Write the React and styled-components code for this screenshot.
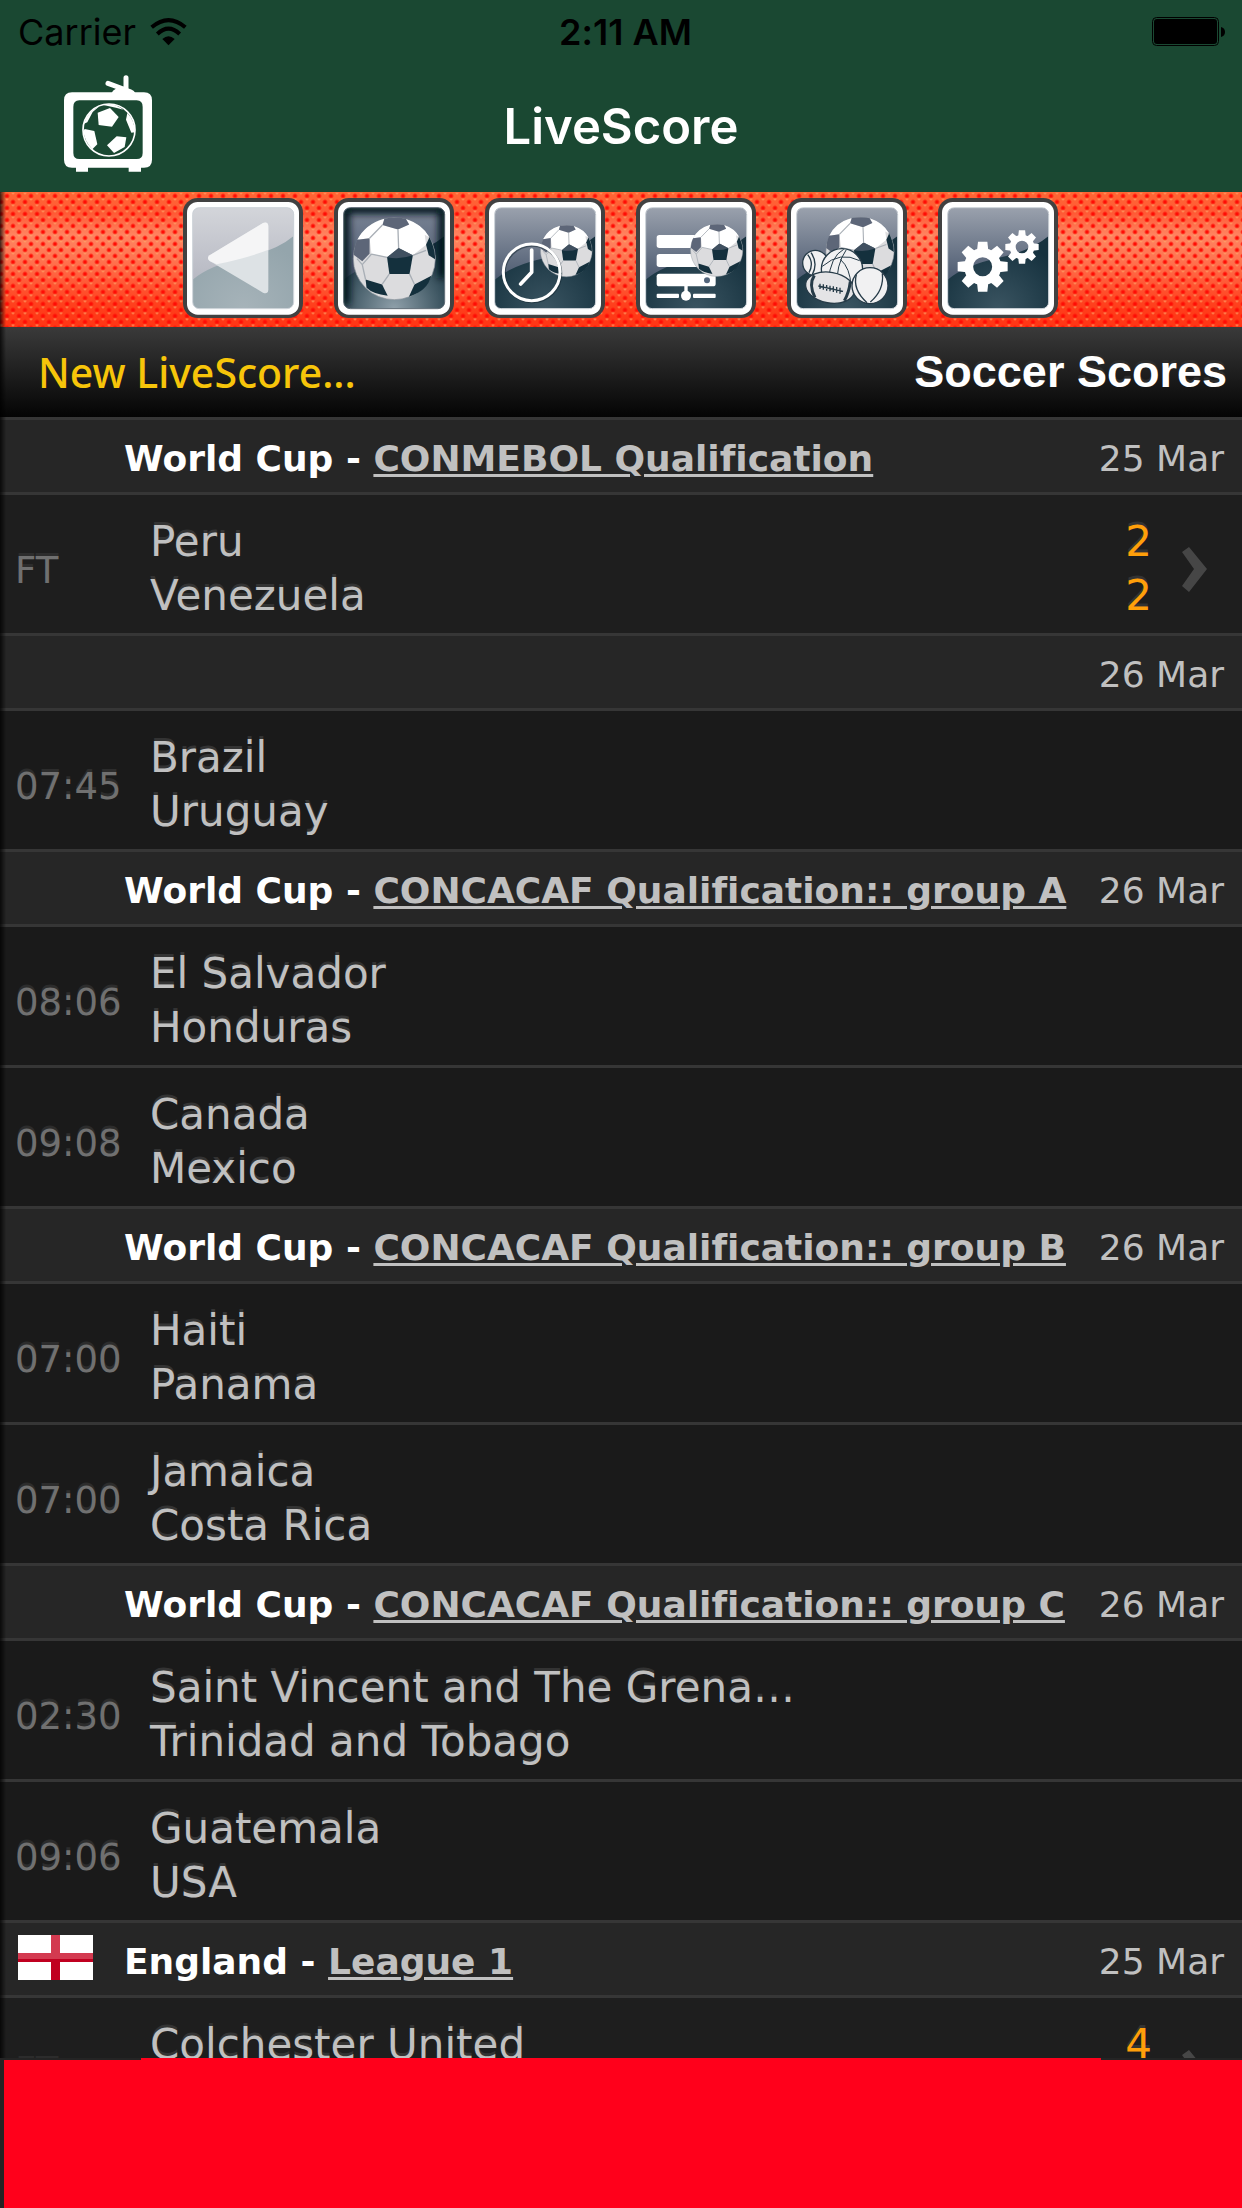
import React from "react";
import styled, { createGlobalStyle, css } from "styled-components";

const GlobalStyle = createGlobalStyle`
  *, *::before, *::after { box-sizing: border-box; }
  html, body { margin: 0; background: #1a1a1a; }
  button { font: inherit; }
`;

const uiFont = `Inter, Roboto, sans-serif`;
const bodyFont = `"DejaVu Sans", Verdana, sans-serif`;

const Screen = styled.div`
  display: flex;
  flex-direction: column;
  height: 100vh;
  overflow: hidden;
  font-family: ${bodyFont};
  font-variant-ligatures: none;
  color: #c0c0c0;
`;

const Header = styled.header`
  flex: none;
  background: #1a4832;
  font-family: ${uiFont};
`;

const StatusBar = styled.div`
  display: grid;
  grid-template-columns: 1fr auto 1fr;
  align-items: center;
  height: 60px;
  padding: 3px 17px 0 18px;
  color: #000;
  font-size: 36px;
  line-height: 44px;
`;

const Carrier = styled.div`
  display: flex;
  align-items: center;
  gap: 14px;
`;

const Clock = styled.time`
  padding-left: 8px;
  font-weight: 600;
`;

const Battery = styled.div`
  display: flex;
  justify-content: flex-end;
`;

const NavBar = styled.div`
  display: grid;
  grid-template-columns: 1fr auto 1fr;
  align-items: center;
  height: 132px;
  padding: 2px 64px 0;
`;

const LogoButton = styled.button`
  justify-self: start;
  display: flex;
  padding: 0;
  margin-bottom: 8px;
  border: 0;
  background: none;
`;

const AppTitle = styled.h1`
  margin: 0;
  color: #fff;
  font-size: 49px;
  line-height: 60px;
  font-weight: 600;
`;

const Content = styled.div`
  position: relative;
  flex: 1;
  min-height: 0;
  display: flex;
  flex-direction: column;

  &::after {
    content: "";
    position: absolute;
    inset: 0 auto 0 0;
    width: 6px;
    background: linear-gradient(to right, rgba(0, 0, 0, 0.75), rgba(0, 0, 0, 0));
    pointer-events: none;
  }
`;

const Toolbar = styled.nav`
  flex: none;
  display: flex;
  justify-content: center;
  gap: 31px;
  padding: 6px 1px 9px 0;
  background-color: #ff5a30;
  background-image:
    radial-gradient(circle, #ff0d05 1px, rgba(255, 13, 5, 0) 3px),
    radial-gradient(circle, #ff0d05 1px, rgba(255, 13, 5, 0) 3px),
    radial-gradient(circle, rgba(255, 176, 112, 0.8) 0, rgba(255, 176, 112, 0) 2px),
    radial-gradient(circle, rgba(255, 176, 112, 0.8) 0, rgba(255, 176, 112, 0) 2px),
    linear-gradient(#ff6634 0%, #ff5a35 16%, #ff8460 32%, #ff7450 50%, #ff3f1c 84%, #ff3414 100%);
  background-size: 12px 12px, 12px 12px, 12px 12px, 12px 12px, 100% 100%;
  background-position: 1px -2px, 7px 4px, 7px 7px, 1px 1px, 0 0;
`;

const ToolButton = styled.button`
  display: flex;
  width: 120px;
  height: 120px;
  padding: 0;
  border: 0;
  background: none;
`;

const TitleBar = styled.div`
  flex: none;
  display: flex;
  align-items: center;
  justify-content: space-between;
  height: 90px;
  padding: 0 15px 0 38px;
  background: linear-gradient(#3a3a3a, #040404);
`;

const NewsLink = styled.a`
  color: #f7c50a;
  font-family: "Noto Sans", "Open Sans", sans-serif;
  font-size: 41px;
  line-height: 54px;
  font-weight: 500;
  text-decoration: none;
`;

const PageTitle = styled.h2`
  margin: 0;
  color: #fff;
  font-family: "Liberation Sans", Arial, sans-serif;
  font-size: 45px;
  line-height: 54px;
  font-weight: 700;
  text-shadow: 0 -3px 0 #2c2c2c;
`;

const Scores = styled.main`
  flex: 1;
  min-height: 0;
  overflow-y: auto;
  scrollbar-width: none;
`;

const League = styled.section``;

const LeagueHeader = styled.header`
  display: flex;
  align-items: center;
  height: 75px;
  padding: 5px 18px 0 18px;
  border-top: 3px solid #363636;
  background: #262626;
  font-size: 36px;
  line-height: 42px;
`;

const FlagSlot = styled.div`
  flex: none;
  display: flex;
  width: 106px;
  padding-bottom: 9px;
`;

const LeagueName = styled.h3`
  flex: 1;
  margin: 0;
  color: #fff;
  font-size: 36px;
  font-weight: 700;
  white-space: nowrap;
`;

const LeagueLink = styled.a`
  color: #c0c0c0;
  text-decoration: underline;
  text-decoration-thickness: 3px;
  text-underline-offset: 3px;
`;

const DateLabel = styled.time`
  flex: none;
`;

const MatchList = styled.ul`
  margin: 0;
  padding: 0;
  list-style: none;
`;

const MatchItem = styled.li`
  border-top: 3px solid #363636;
  background: ${(p) => (p.$played ? "#1e1e1e" : "#1a1a1a")};
`;

const matchLayout = css`
  display: flex;
  align-items: center;
  height: 138px;
  padding: 20px 35px 10px 15px;
  color: inherit;
  text-decoration: none;
`;

const MatchRow = styled.div`
  ${matchLayout}
`;

const MatchLink = styled.a`
  ${matchLayout}
`;

const Kickoff = styled.span`
  flex: none;
  width: 135px;
  padding-top: 4px;
  color: #707070;
  font-size: 37px;
  line-height: 54px;
  text-shadow: 0 -3px 0 #2c2c2c;
`;

const Lines = styled.span`
  display: flex;
  flex-direction: column;
  font-size: 42px;
  line-height: 54px;
  text-shadow: 0 -3px 0 #333;
  ${(p) =>
    p.$score
      ? css`
          color: #ff9f0a;
          padding-right: 29px;
        `
      : css`
          flex: 1;
        `}
`;

const AdFooter = styled.footer`
  flex: none;
  display: flex;
  flex-direction: column;
  align-items: center;
  padding-left: 4px;
  background: #242424;
`;

const AdBanner = styled.div`
  width: 960px;
  max-width: 100%;
  height: 2px;
  margin-right: 4px;
  background: #ff001b;
`;

const AdBody = styled.div`
  width: 100%;
  height: 148px;
  background: #ff001b;
`;

const WifiIcon = () => (
  <svg width="37" height="28" viewBox="0 0 111 84" aria-hidden="true">
    <path d="M55.500 82 L37 63 Q55.500 46 74 63 Z" fill="#000" />
    <path d="M22 48 Q55.500 16 89 48" fill="none" stroke="#000" strokeWidth="12" />
    <path d="M5 28 Q55.500 -15 106 28" fill="none" stroke="#000" strokeWidth="12" />
  </svg>
);

const BatteryIcon = () => (
  <svg width="73" height="30" viewBox="0 0 73 30" aria-hidden="true">
    <rect x="0.5" y="0.5" width="66" height="28" rx="4" fill="none" stroke="#000" />
    <rect x="2" y="2" width="63" height="25" rx="3" />
    <path d="M69 10 q4 1 4 5 t-4 5 z" />
  </svg>
);

const LogoIcon = () => (
  <svg width="88" height="97" viewBox="192 224 264 291" aria-hidden="true">
    <path
      fill="#fff"
      fillRule="evenodd"
      d="M216 276 H432 Q456 276 456 300 V478 Q456 502 432 502 H423 V514 H386 V502 H264 V514 H228 V502 H216 Q192 502 192 478 V300 Q192 276 216 276 Z M238 300 Q220 300 220 320 V458 Q220 476 238 476 H410 Q428 476 428 458 V320 Q428 300 410 300 Z"
    />
    <path d="M335 278 Q340 262 370 262 Q400 264 406 278 Z" fill="#fff" />
    <path d="M378 232 V268 M324 249 L370 266" stroke="#fff" strokeWidth="15" strokeLinecap="round" />
    <circle cx="327" cy="389" r="78" fill="none" stroke="#fff" strokeWidth="5" />
    <g fill="#fff">
      <path d="M293 337 L330 323 L356 350 L336 379 L296 374 Z" />
      <path d="M350 408 L379 411 L374 440 L342 458 L321 435 Z" />
      <path d="M254 386 L283 392 L292 432 L277 447 Q254 424 250 392 Z" />
      <path d="M378 358 L382 338 Q404 360 405 396 L394 397 Z" />
      <path d="M252 370 Q262 334 300 316 L278 335 L262 366 Z" />
      <path d="M310 314 Q340 306 370 328 L348 322 Z" />
    </g>
  </svg>
);

const SoccerBall = ({ cx, cy, r, shade }) => (
  <g transform={`translate(${cx} ${cy}) scale(${r / 125})`}>
    <circle r="124" fill={shade} stroke="#8b949d" strokeWidth="2" />
    <path d="M-75 -62 L-36 -102 L11 -88 L13 -32 L-22 -4 L-69 -14 Z M11 -88 L45 -103 L92 -72 L96 -42 L56 -10 L13 -32 Z M-75 -62 L-112 -57 Q-88 -105 -30 -121 L-36 -102 Z M45 -103 L35 -120 Q85 -104 106 -65 L92 -72 Z" fill="#fff" />
    <g fill="#14303d">
      <path d="M-22 -4 L13 -32 L56 -10 L46 46 L-15 46 Z" />
      <path d="M-87 63 L-37 78 L-20 112 Q-65 107 -84 88 Z" />
      <path d="M112 52 Q100 98 44 115 L61 78 Z" />
      <path d="M96 -42 L106 -65 Q124 -30 123 2 L104 -10 Z" />
    </g>
    <g fill="#5d6678">
      <path d="M-112 -57 L-75 -62 L-75 -15 L-97 8 L-123 -12 Q-121 -40 -112 -57 Z" />
      <path d="M-30 -121 Q5 -128 35 -120 L45 -103 L11 -88 L-36 -102 Z" />
      <path d="M-22 -4 L13 -32 L56 -10 Q18 4 -22 -4 Z" opacity="0.6" />
    </g>
    <path
      d="M-69 -14 L-22 -4 M-36 -102 L-75 -62 M13 -32 L11 -88 M56 -10 L96 -25 M46 46 L61 78 M-15 46 L-37 78 M-97 18 L-69 -14 M-97 18 L-87 63 M-97 18 L-113 0"
      fill="none"
      stroke="#a9afb6"
      strokeWidth="4"
    />
  </g>
);

const Gear = ({ cx, cy, r }) => (
  <g transform={`translate(${cx} ${cy}) scale(${r / 75})`}>
    <circle r="42" fill="none" stroke="#fff" strokeWidth="27" />
    {[0, 45, 90, 135, 180, 225, 270, 315].map((a) => (
      <path key={a} d="M-17 -48 L-14 -75 H14 L17 -48 Z" fill="#fff" transform={`rotate(${a})`} />
    ))}
  </g>
);

const Tile = ({ id, pale, pressed, children }) => (
  <svg width="120" height="120" viewBox="0 0 360 360" aria-hidden="true">
    <defs>
      <linearGradient id={`${id}-top`} x1="0" y1="0" x2="0" y2="1">
        <stop offset="0" stopColor={pale ? "#d3d5da" : pressed ? "#7a8495" : "#9aa1ad"} />
        <stop offset="1" stopColor={pale ? "#b7b9c3" : "#4c5a70"} />
      </linearGradient>
      <radialGradient id={`${id}-low`} cx="0.5" cy="1" r="0.7">
        <stop offset="0" stopColor={pale ? "#a6b3b9" : pressed ? "#8fa0aa" : "#3a5461"} />
        <stop offset="1" stopColor={pale ? "#94a5ac" : "#15313e"} />
      </radialGradient>
      <clipPath id={`${id}-clip`}>
        <rect x="29" y="29" width="303" height="303" rx="20" />
      </clipPath>
      <filter id={`${id}-soft`} x="-20%" y="-20%" width="140%" height="140%">
        <feGaussianBlur stdDeviation="11" />
      </filter>
    </defs>
    <rect width="360" height="360" rx="44" fill="#414141" />
    <rect x="12" y="12" width="336" height="338" rx="32" fill="#fff" />
    <g clipPath={`url(#${id}-clip)`}>
      <rect x="29" y="29" width="303" height="303" fill={`url(#${id}-low)`} />
      <path d="M29 29 H332 V114 Q280 158 180 180 Q80 202 29 245 Z" fill={`url(#${id}-top)`} />
      {pressed && (
        <path
          d="M34 320 V34 H326 V240"
          fill="none"
          stroke="#03141d"
          strokeWidth="26"
          filter={`url(#${id}-soft)`}
        />
      )}
    </g>
    <rect x="29" y="29" width="303" height="303" rx="20" fill="none" stroke={pressed ? "#5b6872" : "#cdd2d8"} strokeWidth="3" />
    {children}
  </svg>
);

const BackIcon = () => (
  <Tile id="back" pale>
    <path d="M80 172 L240 75 Q256 70 256 86 V276 Q254 290 240 284 L80 189 Q70 180 80 172 Z" fill="#dde2e5" />
    <path d="M80 172 L240 75 Q256 70 256 86 V155 Q200 178 101 199 L80 189 Q70 180 80 172 Z" fill="#f5f5f6" />
  </Tile>
);

const ScoresIcon = () => (
  <Tile id="scores" pressed>
    <SoccerBall cx={181} cy={182} r={124} shade="#dcdcde" />
  </Tile>
);

const LiveIcon = () => (
  <Tile id="live">
    <SoccerBall cx={244} cy={159} r={78} shade="#dcdcde" />
    <g fill="none" strokeLinejoin="round" strokeLinecap="round">
      <circle cx="142" cy="226" r="85" stroke="#12242e" strokeWidth="10" opacity="0.5" />
      <circle cx="140" cy="223" r="85" stroke="#fff" strokeWidth="9" />
      <path d="M140 156 V223 L107 258" stroke="#fff" strokeWidth="11" />
    </g>
  </Tile>
);

const TablesIcon = () => (
  <Tile id="tables">
    <g fill="#fff">
      <rect x="62" y="111" width="140" height="39" rx="8" />
      <rect x="62" y="168" width="140" height="39" rx="8" />
      <rect x="62" y="227" width="177" height="38" rx="8" />
      <rect x="145" y="262" width="10" height="24" />
      <circle cx="150" cy="293" r="15" />
      <rect x="62" y="287" width="67" height="13" rx="3" />
      <rect x="171" y="287" width="68" height="13" rx="3" />
    </g>
    <circle cx="213" cy="247" r="9" fill="#53657b" />
    <SoccerBall cx={242} cy={157} r={79} shade="#dcdcde" />
  </Tile>
);

const SportsIcon = () => (
  <Tile id="sports">
    <SoccerBall cx={219} cy={160} r={103} shade="#dcdcde" />
    <g stroke="#263b48" strokeWidth="4" fill="#f1f1f2">
      <circle cx="85" cy="195" r="38" />
      <path d="M62 170 Q82 195 66 224 M72 164 Q94 195 76 230" fill="none" />
      <circle cx="165" cy="214" r="62" />
      <path d="M106 205 Q160 158 218 188 M124 250 Q130 175 170 154 M150 272 Q146 200 178 155 M160 184 Q190 210 192 265" fill="none" strokeWidth="3" />
      <ellipse cx="129" cy="269" rx="74" ry="46" transform="rotate(10 129 269)" fill="#e4e4e6" />
      <path d="M82 232 Q64 260 84 298 M190 250 Q186 284 172 308" fill="none" strokeWidth="9" />
      <path d="M94 264 L168 280 M99 257 V273 M109 259 V275 M119 261 V278 M129 263 V280 M139 265 V282 M149 267 V284 M159 269 V287" strokeWidth="4" />
      <circle cx="249" cy="263" r="54" />
      <path d="M208 230 Q196 275 240 314 M286 226 Q292 276 250 312" fill="none" />
    </g>
  </Tile>
);

const SettingsIcon = () => (
  <Tile id="settings">
    <Gear cx={134} cy={206} r={75} />
    <Gear cx={252} cy={147} r={50} />
  </Tile>
);

const Chevron = () => (
  <svg width="26" height="45" viewBox="0 0 26 45" aria-hidden="true">
    <path d="M1 5 L8 0 L26 22 L8 45 L1 39 L13 22 Z" fill="#464646" />
  </svg>
);

const EnglandFlag = () => (
  <svg width="75" height="45" viewBox="0 0 75 45" role="img" aria-label="England">
    <rect width="75" height="45" fill="#fff" />
    <path d="M33 0 H42 V18 H75 V24 H0 V18 H33 Z" fill="#d33a50" />
    <path d="M0 24 H75 V27 H42 V45 H33 V27 H0 Z" fill="#c00020" />
  </svg>
);

const tools = [
  ["Back", BackIcon],
  ["Soccer scores", ScoresIcon],
  ["Live matches", LiveIcon],
  ["Tables", TablesIcon],
  ["All sports", SportsIcon],
  ["Settings", SettingsIcon],
];

const leagues = [
  {
    region: "World Cup",
    name: "CONMEBOL Qualification",
    date: "25 Mar",
    matches: [{ time: "FT", teams: ["Peru", "Venezuela"], score: [2, 2] }],
  },
  { date: "26 Mar", matches: [{ time: "07:45", teams: ["Brazil", "Uruguay"] }] },
  {
    region: "World Cup",
    name: "CONCACAF Qualification:: group A",
    date: "26 Mar",
    matches: [
      { time: "08:06", teams: ["El Salvador", "Honduras"] },
      { time: "09:08", teams: ["Canada", "Mexico"] },
    ],
  },
  {
    region: "World Cup",
    name: "CONCACAF Qualification:: group B",
    date: "26 Mar",
    matches: [
      { time: "07:00", teams: ["Haiti", "Panama"] },
      { time: "07:00", teams: ["Jamaica", "Costa Rica"] },
    ],
  },
  {
    region: "World Cup",
    name: "CONCACAF Qualification:: group C",
    date: "26 Mar",
    matches: [
      { time: "02:30", teams: ["Saint Vincent and The Grena…", "Trinidad and Tobago"] },
      { time: "09:06", teams: ["Guatemala", "USA"] },
    ],
  },
  {
    region: "England",
    name: "League 1",
    date: "25 Mar",
    flag: EnglandFlag,
    matches: [{ time: "FT", teams: ["Colchester United"], score: [4] }],
  },
];

const Match = ({ match }) => {
  const Row = match.score ? MatchLink : MatchRow;
  const pad = match.teams.length < 2;
  return (
    <MatchItem $played={Boolean(match.score)}>
      <Row {...(match.score ? { href: "#match" } : {})}>
        <Kickoff>{match.time}</Kickoff>
        <Lines>
          {match.teams.map((t) => <span key={t}>{t}</span>)}
          {pad && <span>&nbsp;</span>}
        </Lines>
        {match.score && (
          <>
            <Lines $score>
              {match.score.map((s, i) => <span key={i}>{s}</span>)}
              {pad && <span>&nbsp;</span>}
            </Lines>
            <Chevron />
          </>
        )}
      </Row>
    </MatchItem>
  );
};

export default function App() {
  return (
    <Screen>
      <GlobalStyle />
      <Header>
        <StatusBar>
          <Carrier>
            Carrier
            <WifiIcon />
          </Carrier>
          <Clock>2:11 AM</Clock>
          <Battery>
            <BatteryIcon />
          </Battery>
        </StatusBar>
        <NavBar>
          <LogoButton aria-label="Home">
            <LogoIcon />
          </LogoButton>
          <AppTitle>LiveScore</AppTitle>
        </NavBar>
      </Header>
      <Content>
        <Toolbar aria-label="Sections">
          {tools.map(([label, Icon]) => (
            <ToolButton key={label} aria-label={label}>
              <Icon />
            </ToolButton>
          ))}
        </Toolbar>
        <TitleBar>
          <NewsLink href="#new">New LiveScore...</NewsLink>
          <PageTitle>Soccer Scores</PageTitle>
        </TitleBar>
        <Scores>
          {leagues.map(({ region, name, date, flag: Flag, matches }, i) => (
            <League key={i}>
              <LeagueHeader>
                <FlagSlot>{Flag && <Flag />}</FlagSlot>
                <LeagueName>
                  {region && (
                    <>
                      {region} - <LeagueLink href="#league">{name}</LeagueLink>
                    </>
                  )}
                </LeagueName>
                <DateLabel>{date}</DateLabel>
              </LeagueHeader>
              <MatchList>
                {matches.map((m) => <Match key={m.teams[0]} match={m} />)}
              </MatchList>
            </League>
          ))}
        </Scores>
      </Content>
      <AdFooter aria-label="Advertisement">
        <AdBanner />
        <AdBody />
      </AdFooter>
    </Screen>
  );
}
